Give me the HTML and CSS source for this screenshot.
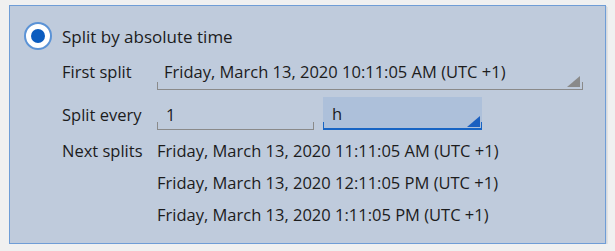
FILE: index.html
```html
<!DOCTYPE html>
<html lang="en">
<head>
  <meta charset="UTF-8">
  <title>Split options</title>
  <link rel="stylesheet" href="styles.css">
</head>
<body>
  <section class="panel">
    <label class="radio-row">
      <span class="radio checked"><span class="radio-dot"></span></span>
      <span class="radio-label">Split by absolute time</span>
    </label>

    <div class="form">
      <div class="row row-first">
        <span class="form-label">First split</span>
        <div class="field field-wide">
          <span class="field-text">Friday, March 13, 2020 10:11:05 AM (UTC +1)</span>
          <svg class="corner" width="13" height="11" viewBox="0 0 13 11"><path d="M13 0 L13 11 L0 11 Z" fill="#8a8a8a"/></svg>
        </div>
      </div>

      <div class="row row-every">
        <span class="form-label">Split every</span>
        <div class="field field-number">
          <span class="field-text">1</span>
        </div>
        <div class="field field-select">
          <span class="field-text">h</span>
          <svg class="corner" width="13" height="11" viewBox="0 0 13 11"><path d="M13 0 L13 11 L0 11 Z" fill="#1a5fc0"/></svg>
        </div>
      </div>

      <div class="row row-next">
        <span class="form-label">Next splits</span>
        <ul class="next-list">
          <li>Friday, March 13, 2020 11:11:05 AM (UTC +1)</li>
          <li>Friday, March 13, 2020 12:11:05 PM (UTC +1)</li>
          <li>Friday, March 13, 2020 1:11:05 PM (UTC +1)</li>
        </ul>
      </div>
    </div>
  </section>
</body>
</html>
```
FILE: styles.css
```css
:root {
  --panel-bg: #bfcbdc;
  --panel-border: #6f9dd6;
  --accent: #1764c4;
  --text: #1c1c1c;
  --line: #8a8a8a;
}

* {
  margin: 0;
  padding: 0;
  box-sizing: border-box;
}

body {
  background: #f0f0f0;
  font-family: 'Open Sans', 'Noto Sans', sans-serif;
  font-size: 16.5px;
  color: var(--text);
}

.panel {
  margin: 5px 0 0 9px;
  width: 597px;
  height: 239px;
  background: var(--panel-bg);
  border: 1px solid var(--panel-border);
  box-shadow: 1px 1px 0 #d4d9e0, 2px 2px 0 #e2e2e2;
  padding: 16px 0 0 14px;
}

.radio-row {
  display: flex;
  align-items: center;
  gap: 10px;
  height: 28px;
}

.radio {
  width: 28px;
  height: 28px;
  border-radius: 50%;
  border: 2px solid #5b93d6;
  background: white;
  display: flex;
  align-items: center;
  justify-content: center;
}

.radio-dot {
  width: 14px;
  height: 14px;
  border-radius: 50%;
  background: #0b5cbf;
}

.radio-label {
  font-size: 17px;
  line-height: 22px;
  padding-top: 1px;
}

.form {
  margin-left: 38px;
  margin-top: 9px;
}

.row {
  display: flex;
}

.form-label {
  width: 95px;
  flex-shrink: 0;
  line-height: 22px;
}

.field {
  position: relative;
  line-height: 22px;
}

.field::before,
.field::after {
  content: '';
  position: absolute;
  bottom: 0;
  width: 1px;
  height: 7px;
  background: var(--line);
}

.field::before {
  left: 0;
}

.field::after {
  right: 0;
}

.field-wide {
  width: 426px;
  height: 31px;
  padding: 2px 0 0 7px;
  border-bottom: 1px solid var(--line);
}

.row-first .form-label {
  padding-top: 2px;
}

.row-every {
  margin-top: 7px;
}

.row-every .form-label {
  padding-top: 7px;
}

.field-number {
  width: 157px;
  height: 33px;
  padding: 7px 0 0 9px;
  border-bottom: 1px solid var(--line);
}

.field-select {
  width: 159px;
  height: 33px;
  margin-left: 9px;
  padding: 6px 0 0 9px;
  background: #adc0da;
  border-bottom: 2px solid var(--accent);
}

.field-select::before,
.field-select::after {
  background: var(--accent);
  height: 6px;
}

.corner {
  position: absolute;
  right: 3px;
  bottom: 2px;
}

.field-select .corner {
  right: 2px;
  bottom: 1px;
}

.row-next {
  margin-top: 5px;
}

.row-next .form-label,
.next-list {
  line-height: 32px;
}

.next-list {
  list-style: none;
}
```
